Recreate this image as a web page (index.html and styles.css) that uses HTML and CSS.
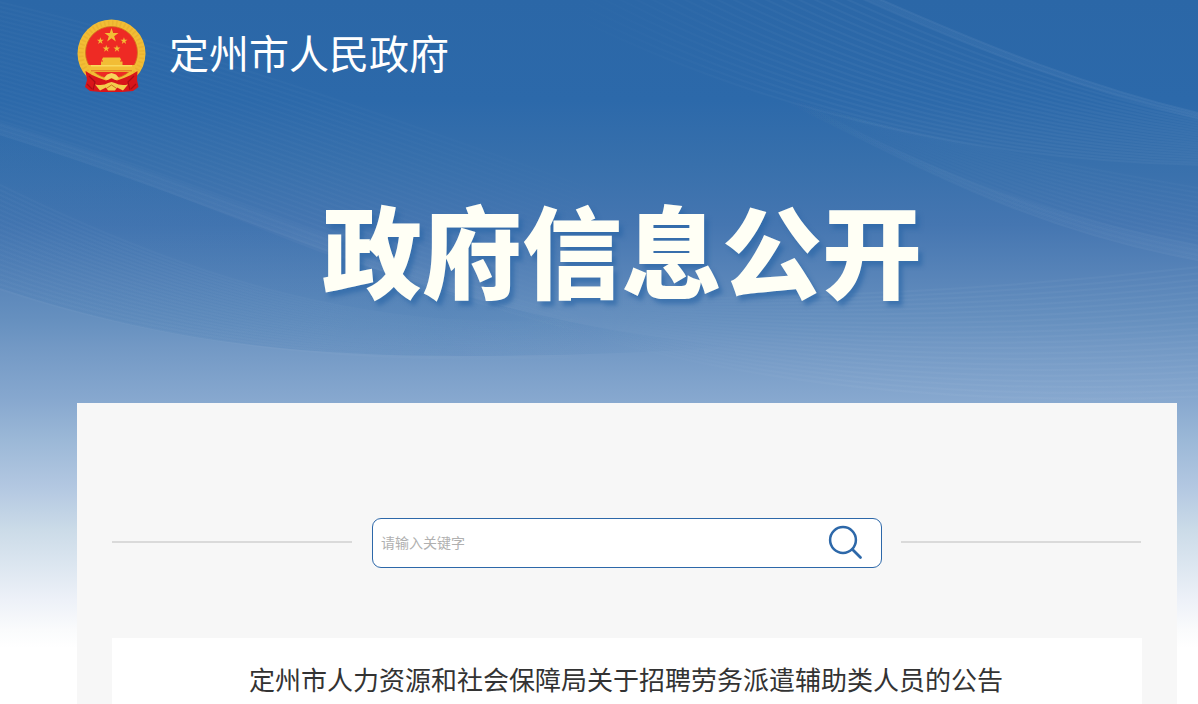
FILE: index.html
```
<!DOCTYPE html>
<html lang="zh-CN">
<head>
    <meta charset="UTF-8">
    <meta name="viewport" content="width=device-width, initial-scale=1.0">
    <title>定州市人民政府 政府信息公开</title>
    <link rel="stylesheet" href="styles.css">
</head>
<body>
    <svg class="bg-wave" id="wave" viewBox="0 0 1198 650" width="1198" height="650" aria-hidden="true">
        <defs>
            <linearGradient id="shade" x1="0" y1="0" x2="1" y2="0">
                <stop offset="0" stop-color="#2b69a9" stop-opacity="0.12"/>
                <stop offset="0.6" stop-color="#2b69a9" stop-opacity="0.17"/>
                <stop offset="1" stop-color="#2b69a9" stop-opacity="0"/>
            </linearGradient>
            <linearGradient id="fadeLeft" gradientUnits="userSpaceOnUse" x1="0" y1="0" x2="640" y2="0">
                <stop offset="0.5" stop-color="#fff"/>
                <stop offset="1" stop-color="#fff" stop-opacity="0"/>
            </linearGradient>
            <linearGradient id="fadeRight" gradientUnits="userSpaceOnUse" x1="760" y1="0" x2="1060" y2="0">
                <stop offset="0" stop-color="#fff" stop-opacity="0"/>
                <stop offset="1" stop-color="#fff"/>
            </linearGradient>
            <linearGradient id="fadeMid" gradientUnits="userSpaceOnUse" x1="560" y1="0" x2="860" y2="0">
                <stop offset="0" stop-color="#fff" stop-opacity="0"/>
                <stop offset="1" stop-color="#fff"/>
            </linearGradient>
        </defs>
        <path d="M0 288C160 342 300 356 460 356C560 356 650 353 740 346C580 335 440 290 320 252C210 210 110 166 0 133Z" fill="url(#shade)"/>
    </svg>

    <div class="container">
        <div class="header">
            <svg class="emblem" viewBox="0 0 70 76" width="70" height="76">
                <circle cx="34.5" cy="35.5" r="34" fill="#f2bd35"/>
                <circle cx="34.5" cy="35.5" r="30.5" fill="none" stroke="#dc9d25" stroke-width="5" stroke-dasharray="1.5 2.5" opacity="0.3"/>
                <circle cx="34.5" cy="34.5" r="26" fill="#ee2a24" stroke="#cf791d" stroke-width="0.8"/>
                <g fill="#f2bd35">
                    <path id="star" d="M34.5 10L36.2 15.1H41.5L37.2 18.3L38.8 23.4L34.5 20.2L30.2 23.4L31.8 18.3L27.5 15.1H32.8Z"/>
                    <use href="#star" transform="translate(6.1 14.2) scale(.5)"/>
                    <use href="#star" transform="translate(29.7 14.2) scale(.5)"/>
                    <use href="#star" transform="translate(12 22) scale(.5)"/>
                    <use href="#star" transform="translate(22.7 22) scale(.5)"/>
                    <path d="M26 39.5H43L44.5 42.5H43V43.5H45.5V47H59L54 54H15L10 47H24V43.5H26V42.5H24.5Z"/>
                </g>
                <path d="M14 47.8H55" stroke="#f9d95c" stroke-width="1.6"/>
                <path d="M14 52.8H55" stroke="#e2702a" stroke-width="1"/>
                <path d="M8.500 53Q14 57 22 60L29 62.500L34.500 60.500L40 62.500L47 60Q55 57 60.500 53L60 62L61.500 69L56 73L45 74H24L13 73L8 69L10 62Z" fill="#d9151a"/>
                <path d="M12 58L18 64L16 72M57 58L51 64L53 72M10 66L15 71M59 66L54 71" fill="none" stroke="#a90e14" stroke-width="1.2"/>
                <path d="M27 60L30 56.500L34.500 55L39 56.500L42 60L39 62L34.500 60L30 62Z" fill="#f7d45b"/>
                <path d="M18 66.500Q27 68 31 65L34.500 64L38 65Q43 68 51 66.500L46 72.500L40 69.500L38 72.500H31L29 69.500L23 72.500Z" fill="#f3cd4c"/>
                <path d="M30 70L34.500 67L39 70" fill="none" stroke="#d2701f"/>
            </svg>
            <span class="site-name">定州市人民政府</span>
        </div>

        <h1 class="banner-title">政府信息公开</h1>

        <div class="main">
            <div class="search-row">
                <span class="line"></span>
                <form class="search-box" onsubmit="return false">
                    <input type="text" class="search-input" placeholder="请输入关键字">
                    <button type="submit" class="search-btn" aria-label="搜索">
                        <svg viewBox="0 0 36 36" width="36" height="36" fill="none" stroke="#2d68a9">
                            <circle cx="16" cy="16" r="12.9" stroke-width="2.500"/>
                            <path d="M25.500 25.500L33.500 33.500" stroke-width="2.800" stroke-linecap="round"/>
                        </svg>
                    </button>
                </form>
                <span class="line"></span>
            </div>
            <div class="article">
                <h2 class="article-title">定州市人力资源和社会保障局关于招聘劳务派遣辅助类人员的公告</h2>
            </div>
        </div>
    </div>

    <script>
        // 每组波纹：起始曲线、结束曲线、线条数、透明度、渐变
        const groups = [
            [[870, -5, 990, 48, 1090, 88, 1210, 116], [540, 0, 780, 125, 1010, 162, 1210, 165], 22, 0.035, 'fadeMid'],
            [[870, -5, 990, 48, 1090, 88, 1210, 116], [856, -5, 980, 51, 1090, 93, 1210, 122], 6, 0.025, 'fadeMid'],
            [[-10, 131, 230, 205, 420, 300, 640, 345], [-10, 0, 250, 60, 480, 150, 900, 300], 30, 0.018, 'fadeLeft'],
            [[-10, 131, 230, 205, 420, 300, 640, 345], [-10, 120, 230, 192, 430, 288, 640, 330], 7, 0.025, 'fadeLeft'],
            [[-10, 286, 180, 350, 390, 370, 640, 353], [-10, 180, 160, 265, 390, 355, 640, 310], 22, 0.025, 'fadeLeft'],
            [[540, 320, 720, 380, 940, 408, 1210, 396], [540, 300, 800, 300, 1000, 290, 1210, 266], 22, 0.03, 'fadeMid'],
            [[760, 90, 900, 155, 1020, 230, 1210, 262], [780, 90, 930, 175, 1060, 220, 1210, 248], 9, 0.025, 'fadeRight'],
            [[760, 90, 900, 155, 1020, 230, 1210, 262], [860, 120, 990, 150, 1090, 170, 1210, 190], 16, 0.018, 'fadeRight']
        ];
        const wave = document.getElementById('wave');
        groups.forEach(([a, b, count, opacity, fade]) => {
            for (let i = 0; i < count; i++) {
                const t = i / (count - 1);
                const p = a.map((v, k) => (v + (b[k] - v) * t).toFixed(1));
                const path = document.createElementNS('http://www.w3.org/2000/svg', 'path');
                path.setAttribute('d', `M${p[0]} ${p[1]}C${p.slice(2).join(' ')}`);
                path.setAttribute('class', 'wave-line');
                path.setAttribute('stroke', `url(#${fade})`);
                path.setAttribute('stroke-opacity', opacity);
                wave.appendChild(path);
            }
        });
    </script>
</body>
</html>
```
FILE: styles.css
```
* {
    margin: 0;
    padding: 0;
    box-sizing: border-box;
}
body {
    height: 704px;
    overflow: hidden;
    font-family: "Noto Sans CJK SC", "Microsoft YaHei", sans-serif;
    background: #fff linear-gradient(180deg, #2b67a7 0, #2c69aa 100px, #3870ac 165px, #4576b1 225px, #5985b9 280px, #6690bf 320px, #7399c5 348px, #87a8cf 400px, #9bb8d7 440px, #b2c7e1 486px, #cbdbe8 530px, #dce6f0 565px, #edf1f8 600px, #fafbfc 630px, #fff 648px) no-repeat;
}
.bg-wave {
    position: absolute;
    top: 0;
    left: 0;
    z-index: -1;
}
.wave-line {
    fill: none;
    stroke-width: 2;
}
.container {
    width: 1100px;
    margin-left: 77px;
}
.header {
    display: flex;
    align-items: center;
    height: 110px;
    padding-top: 2px;
}
.emblem {
    margin-right: 22px;
}
.site-name {
    font-size: 40px;
    font-weight: 400;
    line-height: 60px;
    color: #fff;
    padding-bottom: 8px;
}
.banner-title {
    height: 293px;
    padding-top: 63px;
    padding-right: 10px;
    font-size: 100px;
    font-weight: 900;
    line-height: 150px;
    text-align: center;
    color: #fffff5;
    text-shadow: 4px 5px 4px rgba(43, 103, 167, 0.65);
}
.main {
    height: 301px;
    padding: 115px 35px 0;
    background: #f7f7f7;
}
.search-row {
    display: flex;
    align-items: center;
    height: 50px;
}
.line {
    width: 240px;
    height: 2px;
    margin-bottom: 2px;
    background: #dadada;
}
.search-box {
    display: flex;
    align-items: center;
    width: 510px;
    height: 50px;
    margin: 0 19px 0 20px;
    padding: 0 18px 2px 8px;
    border: 1px solid #2d68a9;
    border-radius: 9px;
    background: #fff;
}
.search-input {
    flex: 1;
    height: 40px;
    border: none;
    outline: none;
    font-family: inherit;
    font-size: 14px;
    background: transparent;
}
.search-input::placeholder {
    color: #b0b0b0;
}
.search-btn {
    width: 36px;
    height: 36px;
    border: none;
    background: transparent;
    cursor: pointer;
}
.article {
    height: 66px;
    margin-top: 70px;
    padding-top: 21px;
    background: #fff;
}
.article-title {
    padding-right: 2px;
    font-size: 26px;
    font-weight: 400;
    line-height: 40px;
    text-align: center;
    color: #333;
}
```
